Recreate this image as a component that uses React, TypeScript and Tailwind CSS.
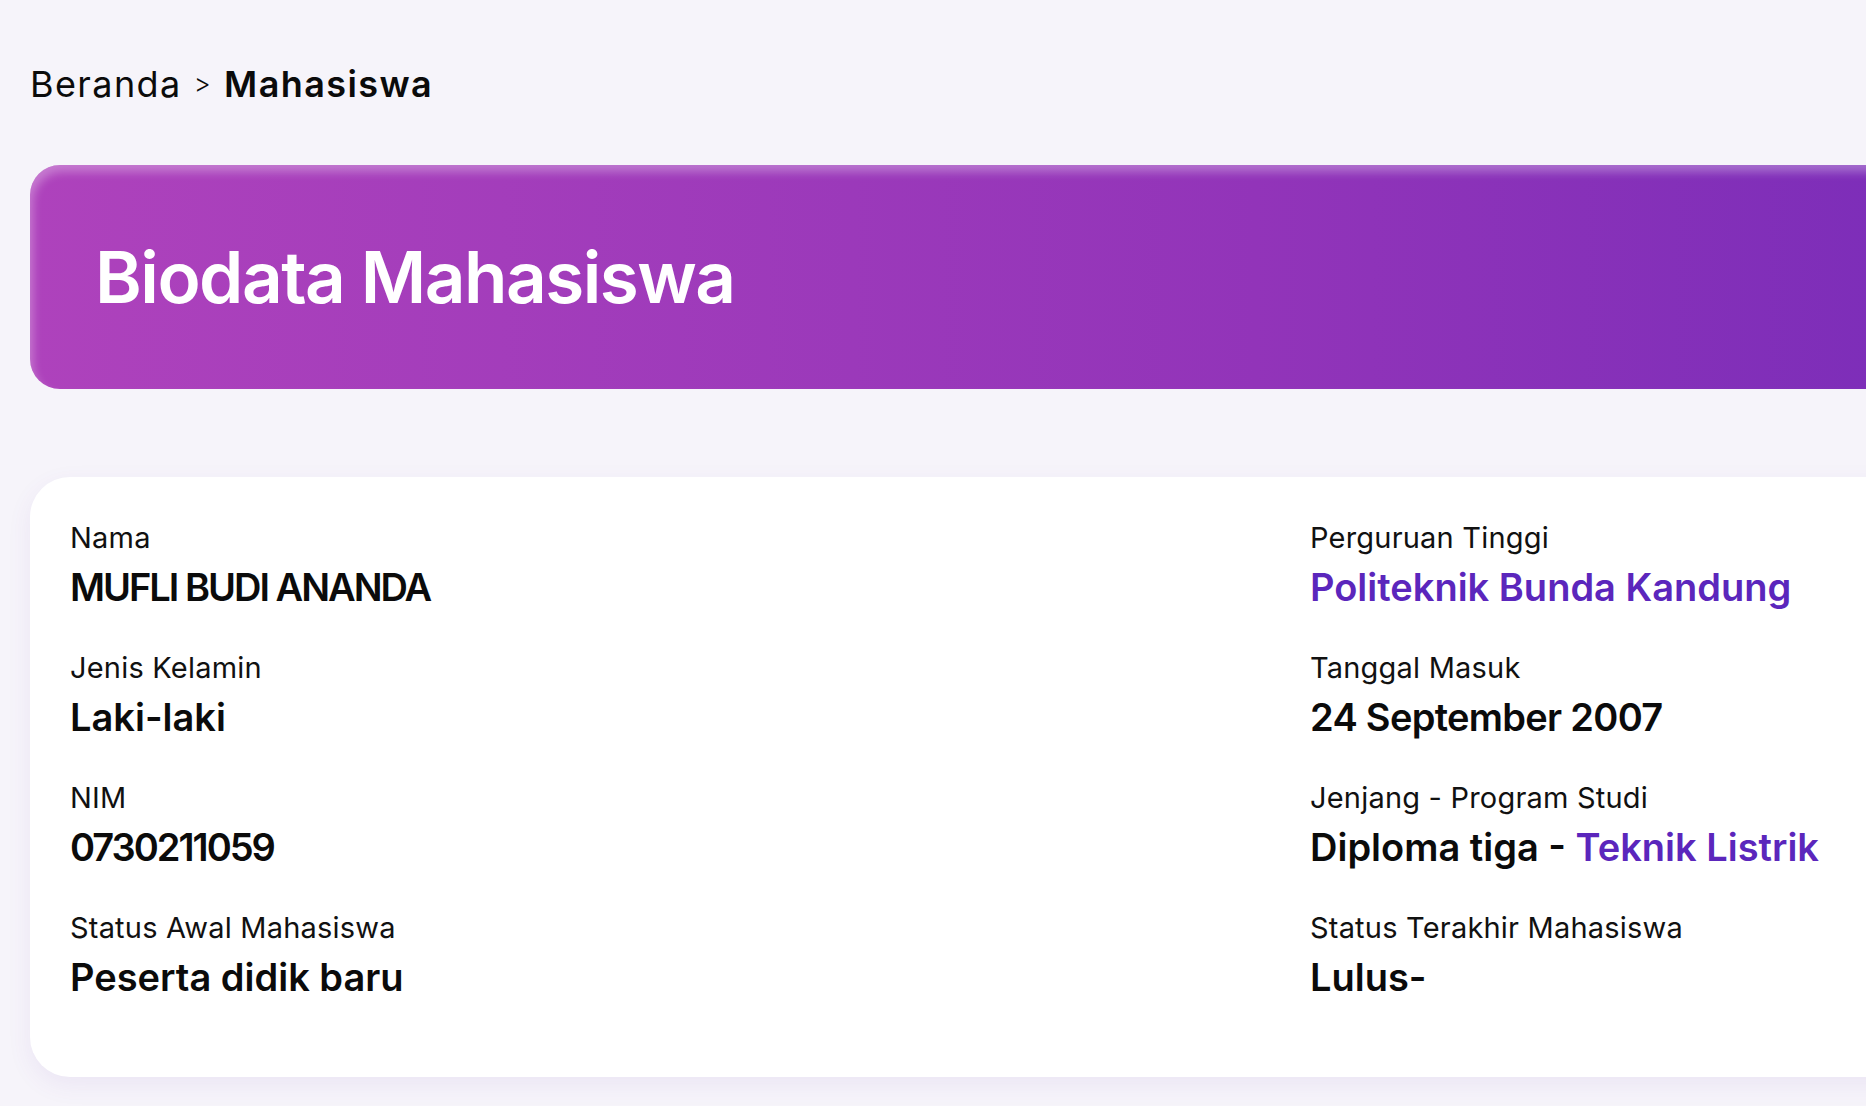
import React from 'react';

interface FieldProps {
  label: string;
  children: React.ReactNode;
}

const Field: React.FC<FieldProps> = ({ label, children }) => (
  <div className="flex flex-col">
    <span className="text-[29px] leading-[42px] tracking-[0.2px] text-[#111111] font-normal">{label}</span>
    <span className="text-[38px] leading-[56px] font-semibold text-[#0b0b0b]">{children}</span>
  </div>
);

const App: React.FC = () => {
  return (
    <div
      className="w-[1866px] h-[1106px] overflow-hidden bg-[#f6f4fa]"
      style={{ fontFamily: 'Inter, "Noto Sans", sans-serif' }}
    >
      <div className="w-[2480px] pl-[30px]">
        {/* Breadcrumb */}
        <div className="pt-[64px] text-[36px] leading-[40px] tracking-[1.4px] text-[#0b0b0b] flex items-center gap-[12px]">
          <span>Beranda</span>
          <span className="text-[26px] font-light">&gt;</span>
          <span className="font-semibold">Mahasiswa</span>
        </div>

        {/* Banner */}
        <div className="mt-[61px] h-[224px] rounded-[30px] flex items-center pl-[65px] bg-gradient-to-r from-[#ae42bc] via-[#9234b9] to-[#6a25b8] shadow-[inset_3px_7px_10px_rgba(255,255,255,0.3)]">
          <h1 className="text-[71px] leading-[73px] tracking-[-1.5px] font-semibold text-white">Biodata Mahasiswa</h1>
        </div>

        {/* Card */}
        <div className="mt-[88px] h-[600px] rounded-[40px] bg-white pt-[40px] pl-[40px] shadow-[0_8px_24px_rgba(110,70,180,0.08)]">
          <div className="grid grid-cols-[1240px_1fr]">
            <div className="flex flex-col gap-[32px]">
              <Field label="Nama">
                <span className="tracking-[-2px]">MUFLI BUDI ANANDA</span>
              </Field>
              <Field label="Jenis Kelamin">Laki-laki</Field>
              <Field label="NIM">
                <span className="tracking-[-2px]">0730211059</span>
              </Field>
              <Field label="Status Awal Mahasiswa">Peserta didik baru</Field>
            </div>
            <div className="flex flex-col gap-[32px]">
              <Field label="Perguruan Tinggi">
                <span className="text-[#5b26bc]">Politeknik Bunda Kandung</span>
              </Field>
              <Field label="Tanggal Masuk">
                <span className="tracking-[-0.7px]">24 September 2007</span>
              </Field>
              <Field label="Jenjang - Program Studi">
                Diploma tiga - <span className="text-[#5b26bc]">Teknik Listrik</span>
              </Field>
              <Field label="Status Terakhir Mahasiswa">Lulus-</Field>
            </div>
          </div>
        </div>
      </div>
    </div>
  );
};

export default App;
